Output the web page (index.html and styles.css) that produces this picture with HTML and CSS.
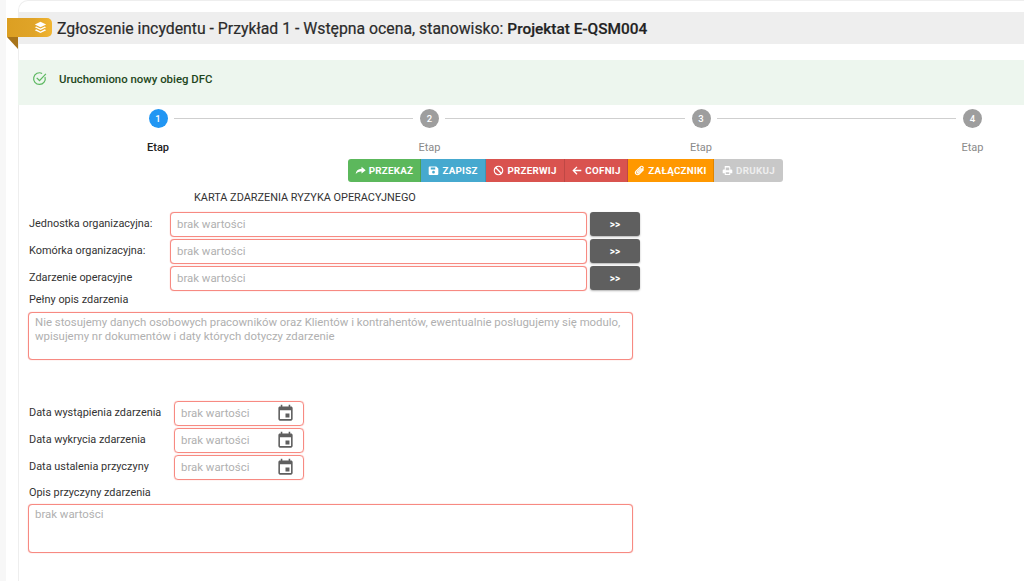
FILE: index.html
```html
<!DOCTYPE html>
<html lang="pl">
<head>
<meta charset="utf-8">
<title>Zgłoszenie incydentu</title>
<link rel="stylesheet" href="styles.css">
</head>
<body>
<main class="card">
  <header class="title-bar">
    <div class="ribbon">
      <svg class="ribbon-icon" viewBox="0 0 16 16"><path d="M8 1 15 4.300 8 7.600 1 4.300Z"/><path d="M2.700 6.700 8 9.200 13.300 6.700 15 7.800 8 11 1 7.800Z"/><path d="M2.700 10.300 8 12.800 13.300 10.300 15 11.400 8 14.700 1 11.400Z"/></svg>
    </div>
    <h1 class="title">Zgłoszenie incydentu - Przykład 1 - Wstępna ocena, stanowisko: <span class="title-strong">Projektat E-QSM004</span></h1>
  </header>

  <div class="alert">
    <svg class="alert-icon" viewBox="0 0 16 16"><path d="M13.900 6.400A6.200 6.200 0 1 1 10.800 2.600"/><path d="M5 7.300 8 10.200 14.800 3"/></svg>
    <span class="alert-text">Uruchomiono nowy obieg DFC</span>
  </div>

  <div class="stepper">
    <div class="step">
      <div class="step-head"><span class="dot dot-active">1</span><span class="line"></span></div>
      <div class="step-label step-label-active"><span>Etap</span></div>
    </div>
    <div class="step">
      <div class="step-head"><span class="dot">2</span><span class="line"></span></div>
      <div class="step-label"><span>Etap</span></div>
    </div>
    <div class="step">
      <div class="step-head"><span class="dot">3</span><span class="line"></span></div>
      <div class="step-label"><span>Etap</span></div>
    </div>
    <div class="step">
      <div class="step-head"><span class="dot">4</span></div>
      <div class="step-label"><span>Etap</span></div>
    </div>
  </div>

  <div class="toolbar">
    <button class="tbtn tbtn-green"><svg viewBox="0 0 16 16"><path d="M9.500 2.500 15.500 7.500 9.500 12.500V9.500C5.500 9.300 3 10.500 1 13.500 1.300 8.800 4.300 5.800 9.500 5.500Z"/></svg>PRZEKAŻ</button>
    <button class="tbtn tbtn-blue"><svg viewBox="0 0 16 16"><path fill-rule="evenodd" d="M2.500 2H12L15 5V13A1.500 1.500 0 0 1 13.500 14.500H2.500A1.500 1.500 0 0 1 1 13V3.500A1.500 1.500 0 0 1 2.500 2ZM4 3.500V6.500H10.500V3.500ZM8 8.500A2 2 0 1 0 8 12.500 2 2 0 0 0 8 8.500Z"/></svg>ZAPISZ</button>
    <button class="tbtn tbtn-red tbtn-przerwij"><svg viewBox="0 0 16 16"><path fill-rule="evenodd" d="M8 1A7 7 0 1 0 8 15 7 7 0 0 0 8 1ZM3.800 5.200 10.800 12.200A5 5 0 0 1 3.800 5.200ZM5.200 3.800A5 5 0 0 1 12.200 10.800Z"/></svg>PRZERWIJ</button>
    <button class="tbtn tbtn-red tbtn-cofnij"><svg viewBox="0 0 16 16"><path d="M8 2 9.400 3.400 5.800 7H15V9H5.800L9.400 12.600 8 14 2 8Z"/></svg>COFNIJ</button>
    <button class="tbtn tbtn-orange"><svg class="clip" viewBox="0 0 16 16"><path d="M14 6.500 7.500 13.200A3 3 0 0 1 3 9L9.700 2.500A2 2 0 0 1 12.700 5.300L6.500 11.400A.9.900 0 0 1 5 10.100L10.700 4.500"/></svg>ZAŁĄCZNIKI</button>
    <button class="tbtn tbtn-grey"><svg viewBox="0 0 16 16"><path fill-rule="evenodd" d="M4 1.500H10.500L12 3V6.500H13.500A1.500 1.500 0 0 1 15 8V12H12V14.500H4V12H1V8A1.500 1.500 0 0 1 2.500 6.500H4ZM5.500 3V7.500H10.500V3.500H5.500ZM5.500 10.500V13H10.500V10.500Z"/></svg>DRUKUJ</button>
  </div>

  <h2 class="form-title">KARTA ZDARZENIA RYZYKA OPERACYJNEGO</h2>

  <div class="rows">
    <div class="row">
      <label class="row-label">Jednostka organizacyjna:</label>
      <input class="field field-wide" placeholder="brak wartości">
      <button class="more">&gt;&gt;</button>
    </div>
    <div class="row">
      <label class="row-label">Komórka organizacyjna:</label>
      <input class="field field-wide" placeholder="brak wartości">
      <button class="more">&gt;&gt;</button>
    </div>
    <div class="row">
      <label class="row-label">Zdarzenie operacyjne</label>
      <input class="field field-wide" placeholder="brak wartości">
      <button class="more">&gt;&gt;</button>
    </div>
  </div>

  <label class="block-label block-label-first">Pełny opis zdarzenia</label>
  <textarea class="area" placeholder="Nie stosujemy danych osobowych pracowników oraz Klientów i kontrahentów, ewentualnie posługujemy się modulo, wpisujemy nr dokumentów i daty których dotyczy zdarzenie"></textarea>

  <div class="rows rows-dates">
    <div class="row">
      <label class="row-label row-label-date">Data wystąpienia zdarzenia</label>
      <div class="date"><input class="date-input" placeholder="brak wartości"><svg class="cal" viewBox="0 0 24 24"><path d="M17 12h-5v5h5v-5zM16 1v2H8V1H6v2H5c-1.110 0-1.990.900-1.990 2L3 19c0 1.100.890 2 2 2h14c1.100 0 2-.900 2-2V5c0-1.100-.900-2-2-2h-1V1h-2zm3 18H5V8h14v11z"/></svg></div>
    </div>
    <div class="row">
      <label class="row-label row-label-date">Data wykrycia zdarzenia</label>
      <div class="date"><input class="date-input" placeholder="brak wartości"><svg class="cal" viewBox="0 0 24 24"><path d="M17 12h-5v5h5v-5zM16 1v2H8V1H6v2H5c-1.110 0-1.990.900-1.990 2L3 19c0 1.100.890 2 2 2h14c1.100 0 2-.900 2-2V5c0-1.100-.900-2-2-2h-1V1h-2zm3 18H5V8h14v11z"/></svg></div>
    </div>
    <div class="row">
      <label class="row-label row-label-date">Data ustalenia przyczyny</label>
      <div class="date"><input class="date-input" placeholder="brak wartości"><svg class="cal" viewBox="0 0 24 24"><path d="M17 12h-5v5h5v-5zM16 1v2H8V1H6v2H5c-1.110 0-1.990.900-1.990 2L3 19c0 1.100.890 2 2 2h14c1.100 0 2-.900 2-2V5c0-1.100-.900-2-2-2h-1V1h-2zm3 18H5V8h14v11z"/></svg></div>
    </div>
  </div>

  <label class="block-label block-label-second">Opis przyczyny zdarzenia</label>
  <textarea class="area area-second" placeholder="brak wartości"></textarea>
</main>
</body>
</html>
```
FILE: styles.css
```css
* { box-sizing: border-box; }
html, body { margin: 0; height: 581px; overflow: hidden; }
body {
  font-family: Roboto, "Liberation Sans", sans-serif;
  color: #333;
  font-size: 10.9px;
  background: linear-gradient(90deg, #f7f7f7 0, #f7f7f7 6px, #fff 6px);
}

.card {
  position: relative;
  margin-left: 18px;
  width: 1006px;
  height: 581px;
  padding-top: 12px;
  background: #fff;
  border-left: 1px solid #eee;
  border-top: 1px solid #eee;
  border-top-left-radius: 10px;
}

.title-bar {
  display: flex;
  align-items: center;
  height: 32px;
  margin-top: -1px;
  margin-left: -1px;
  padding: 1px 0 0 39px;
  background: #eee;
}
.title { margin: 0; font-size: 15.8px; font-weight: 400; color: #2b2b2b; white-space: nowrap; line-height: 31px; -webkit-text-stroke: .2px #2b2b2b; }
.title-strong { font-size: 15.4px; font-weight: 500; color: #222; }

.ribbon {
  position: absolute;
  left: -12px;
  top: 17px;
  width: 45px;
  height: 19px;
  border-radius: 0 5px 5px 0;
  background: linear-gradient(90deg, #dc9f22, #e0a428 60%, #f2b632);
  display: flex;
  align-items: center;
  justify-content: flex-end;
  padding-right: 5px;
}
.ribbon::after {
  content: "";
  position: absolute;
  left: 0;
  top: 19px;
  width: 11px;
  height: 12px;
  background: #a8741a;
  clip-path: polygon(0 0, 100% 0, 100% 100%);
}
.ribbon-icon { width: 13px; height: 13px; fill: #fff; }

.alert {
  display: flex;
  align-items: center;
  height: 45px;
  margin: 16px 0 0 -1px;
  padding: 0 0 8px 14px;
  background: #edf6ee;
}
.alert-icon { width: 15px; height: 15px; fill: none; stroke: #5cb860; stroke-width: 1.300; margin-right: 12px; }
.alert-text { font-size: 11.4px; font-weight: 500; color: #1e4620; }

.stepper {
  display: grid;
  grid-template-columns: repeat(3, 271.5px) 19px;
  margin: 4px 0 0 129.5px;
}
.step { display: flex; flex-direction: column; }
.step-head { display: flex; align-items: center; height: 19px; }
.dot {
  flex: none;
  width: 19px;
  height: 19px;
  border-radius: 50%;
  background: #9e9e9e;
  color: #fff;
  font-size: 9.5px;
  font-weight: 500;
  display: flex;
  align-items: center;
  justify-content: center;
}
.dot-active { background: #2196f3; }
.line { flex: 1; height: 1px; background: #cfcfcf; margin: 0 7px 0 6px; }
.step-label {
  width: 19px;
  display: flex;
  justify-content: center;
  margin-top: 13px;
  color: #8a8a8a;
  font-size: 11px;
  line-height: 14px;
}
.step-label-active { color: #222; font-weight: 500; }

.toolbar { display: flex; margin: 4px 0 0 329px; height: 23px; }
.tbtn {
  display: flex;
  align-items: center;
  justify-content: center;
  height: 23px;
  padding: 0;
  border: 0;
  border-right: 1px solid rgba(0, 0, 0, .12);
  color: #fff;
  font-family: inherit;
  font-size: 9.8px;
  font-weight: 700;
  letter-spacing: .25px;
  white-space: nowrap;
}
.tbtn svg { width: 11px; height: 11px; fill: #fff; margin-right: 3px; }
.tbtn svg.clip { fill: none; stroke: #fff; stroke-width: 1.700; }
.tbtn-green { width: 73px; background: #5cb85c; border-radius: 3px 0 0 3px; }
.tbtn-blue { width: 65px; background: #46a9cf; }
.tbtn-red { background: #d9534f; }
.tbtn-przerwij { width: 79px; }
.tbtn-cofnij { width: 63px; }
.tbtn-orange { width: 86px; background: #ff9800; }
.tbtn-grey { width: 69px; background: #c8c8c8; border-right: 0; border-radius: 0 3px 3px 0; color: #eeeeee; }

.form-title {
  margin: 9px 0 0 175px;
  font-size: 10.9px;
  font-weight: 400;
  color: #333;
  line-height: 14px;
}

.rows { display: flex; flex-direction: column; gap: 2px; margin: 7px 0 0 10px; }
.row { display: flex; align-items: flex-start; height: 25px; }
.row-label { width: 141px; flex: none; padding-top: 1px; line-height: 22px; }
.row-label-date { width: 145px; line-height: 21px; }
.field {
  height: 25px;
  border: 1px solid #f78a82;
  border-radius: 4px;
  padding: 0 6px 1px;
  font-family: inherit;
  font-size: 11.4px;
  color: #333;
  background: #fff;
  outline: 0;
  box-shadow: 0 0 1px #f78a82;
}
.field-wide { width: 417px; }
input::placeholder, textarea::placeholder { color: #b0b0b0; opacity: 1; }
.more {
  width: 50px;
  height: 24px;
  margin-left: 3px;
  border: 0;
  border-radius: 3px;
  background: #5f5f5f;
  color: #fff;
  font-family: inherit;
  font-size: 10px;
  font-weight: 700;
  box-shadow: 0 1px 2px rgba(0, 0, 0, .3);
}

.block-label { display: block; margin-left: 10px; line-height: 14px; }
.block-label-first { margin-top: 2px; }
.block-label-second { margin-top: 6px; }
.area {
  display: block;
  width: 605px;
  height: 48px;
  margin: 5px 0 0 9px;
  padding: 2px 6px;
  border: 1px solid #f78a82;
  border-radius: 4px;
  font-family: inherit;
  font-size: 11.4px;
  line-height: 14px;
  resize: none;
  outline: 0;
  overflow: hidden;
  box-shadow: 0 0 1px #f78a82;
}
.area-second { height: 49px; margin-top: 4px; }

.rows-dates { margin-top: 41px; }
.date {
  display: flex;
  align-items: center;
  width: 130px;
  height: 25px;
  border: 1px solid #f78a82;
  border-radius: 4px;
  padding: 0 1px 0 6px;
  box-shadow: 0 0 1px #f78a82;
}
.date-input {
  flex: 1;
  min-width: 0;
  border: 0;
  padding: 0 0 2px;
  font-family: inherit;
  font-size: 11.4px;
  outline: 0;
}
.cal { flex: none; width: 19px; height: 19px; fill: #5f5f5f; margin-right: 7px; }
```
